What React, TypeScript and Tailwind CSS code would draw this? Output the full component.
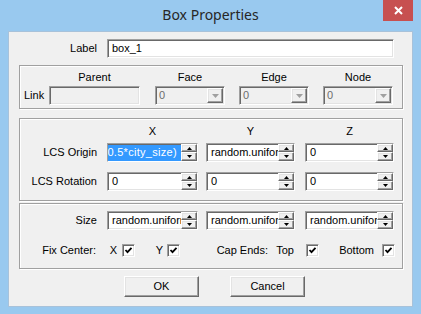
import type { ReactNode } from 'react';

const SUNKEN =
  'border border-t-[#a0a0a0] border-l-[#a0a0a0] border-b-white border-r-white shadow-[inset_1px_1px_0_#696969,inset_-1px_-1px_0_#e3e3e3]';
const RAISED =
  'border border-t-white border-l-white border-b-[#696969] border-r-[#696969] shadow-[inset_-1px_-1px_0_#a0a0a0,inset_1px_1px_0_#e3e3e3] bg-[#f0f0f0]';
const GROUP = 'border border-[#a0a0a0] shadow-[inset_1px_1px_0_#ffffff,1px_1px_0_#ffffff]';

const Spin = () => (
  <div className="flex w-[16px] shrink-0 flex-col">
    <div className={`${RAISED} flex h-[8px] items-center justify-center`}>
      <svg width="5" height="3" viewBox="0 0 5 3">
        <path d="M2.5 0 L5 3 L0 3 Z" fill="#000" />
      </svg>
    </div>
    <div className={`${RAISED} flex h-[9px] items-center justify-center`}>
      <svg width="5" height="3" viewBox="0 0 5 3">
        <path d="M0 0 L5 0 L2.5 3 Z" fill="#000" />
      </svg>
    </div>
  </div>
);

type SpinEditProps = { width: string; value: string; selected?: boolean };

const SpinEdit = ({ width, value, selected }: SpinEditProps) => (
  <div className={`${SUNKEN} ${width} flex h-[19px] shrink-0 bg-white`}>
    {selected ? (
      <div className="flex flex-1 justify-end overflow-hidden whitespace-nowrap pt-[1px] leading-[15px]">
        <span className="bg-[#3399ff] pr-[4px] tracking-[0.3px] text-white">(0.5*city_size)</span>
      </div>
    ) : (
      <div className="flex-1 overflow-hidden whitespace-nowrap pl-[4px] pt-[1px] leading-[15px]">{value}</div>
    )}
    <Spin />
  </div>
);

const Combo = () => (
  <div className={`${SUNKEN} flex h-[19px] w-[70px] shrink-0 bg-[#f0f0f0] p-[1px]`}>
    <div className="flex-1 pl-[2px] leading-[15px] text-[#6d6d6d]">0</div>
    <div className={`${RAISED} flex w-[16px] items-center justify-center`}>
      <svg width="7" height="4" viewBox="0 0 7 4">
        <path d="M0 0 L7 0 L3.5 4 Z" fill="#a0a0a0" />
      </svg>
    </div>
  </div>
);

const Check = () => (
  <div className={`${SUNKEN} flex h-[13px] w-[13px] shrink-0 items-center justify-center bg-white`}>
    <svg width="9" height="9" viewBox="0 0 9 9">
      <path d="M1.5 4 L3.5 6.2 L7.5 1.8" fill="none" stroke="#000" strokeWidth="1.8" />
    </svg>
  </div>
);

const RowLabel = ({ children }: { children: ReactNode }) => (
  <span className="w-[77px] shrink-0 text-right">{children}</span>
);

const Button = ({ children, className }: { children: ReactNode; className: string }) => (
  <div className={`${RAISED} ${className} flex h-[21px] w-[75px] items-center justify-center`}>{children}</div>
);

export default function App() {
  return (
    <div className="flex h-[314px] w-[421px] flex-col bg-[#99c9ef] font-['Liberation_Sans',Arial,sans-serif] text-[11px] text-black">
      <div className="relative flex h-[31px] shrink-0 justify-center">
        <span className="mt-[5px] font-['Noto_Sans',sans-serif] text-[14px] leading-[20px] text-[#262626]">
          Box Properties
        </span>
        <div className="absolute right-[8px] top-0 flex h-[21px] w-[30px] items-center justify-center bg-[#c75050]">
          <svg width="9" height="9" viewBox="0 0 9 9">
            <path d="M1 1 L8 8 M8 1 L1 8" stroke="#fff" strokeWidth="2" />
          </svg>
        </div>
      </div>

      <div className="mx-[8px] flex h-[276px] flex-col border border-[#a8c2da] bg-[#f0f0f0]">
        {/* label */}
        <div className="mt-[7px] flex items-center">
          <span className="w-[88px] text-right">Label</span>
          <div className={`${SUNKEN} ml-[10px] h-[19px] w-[287px] bg-white pl-[4px] pt-[1px] leading-[15px]`}>box_1</div>
        </div>

        {/* link */}
        <div className={`${GROUP} ml-[10px] mt-[7px] flex h-[44px] w-[384px] flex-col`}>
          <div className="mt-[4px] flex h-[14px] leading-[14px]">
            <span className="w-[29px]" />
            <span className="w-[91px] text-center">Parent</span>
            <span className="ml-[15px] w-[70px] text-center">Face</span>
            <span className="ml-[14px] w-[70px] text-center">Edge</span>
            <span className="ml-[14px] w-[70px] text-center">Node</span>
          </div>
          <div className="mt-[2px] flex items-center">
            <span className="w-[29px] pl-[4px]">Link</span>
            <div className={`${SUNKEN} h-[19px] w-[91px] bg-[#f0f0f0]`} />
            <div className="ml-[15px]">
              <Combo />
            </div>
            <div className="ml-[14px]">
              <Combo />
            </div>
            <div className="ml-[14px]">
              <Combo />
            </div>
          </div>
        </div>

        {/* LCS */}
        <div className={`${GROUP} ml-[10px] mt-[9px] flex h-[83px] w-[384px] flex-col`}>
          <div className="mt-[5px] flex h-[14px] leading-[14px]">
            <span className="w-[87px]" />
            <span className="w-[91px] text-center">X</span>
            <span className="ml-[8px] w-[89px] text-center">Y</span>
            <span className="ml-[10px] w-[89px] text-center">Z</span>
          </div>
          <div className="mt-[5px] flex items-center">
            <RowLabel>LCS Origin</RowLabel>
            <div className="ml-[10px] flex gap-[8px]">
              <SpinEdit width="w-[91px]" value="" selected />
              <SpinEdit width="w-[89px]" value="random.uniform(-10, 10)" />
            </div>
            <div className="ml-[10px]">
              <SpinEdit width="w-[89px]" value="0" />
            </div>
          </div>
          <div className="mt-[10px] flex items-center">
            <RowLabel>LCS Rotation</RowLabel>
            <div className="ml-[10px] flex gap-[8px]">
              <SpinEdit width="w-[91px]" value="0" />
              <SpinEdit width="w-[89px]" value="0" />
            </div>
            <div className="ml-[10px]">
              <SpinEdit width="w-[89px]" value="0" />
            </div>
          </div>
        </div>

        {/* size */}
        <div className={`${GROUP} ml-[10px] mt-[2px] flex h-[66px] w-[384px] flex-col`}>
          <div className="mt-[7px] flex items-center">
            <RowLabel>Size</RowLabel>
            <div className="ml-[10px] flex gap-[8px]">
              <SpinEdit width="w-[91px]" value="random.uniform(5, 10)" />
              <SpinEdit width="w-[89px]" value="random.uniform(5, 10)" />
            </div>
            <div className="ml-[10px]">
              <SpinEdit width="w-[89px]" value="random.uniform(5, 10)" />
            </div>
          </div>
          <div className="mt-[14px] flex h-[13px] items-center">
            <span className="w-[76px] shrink-0 text-right">Fix Center:</span>
            <span className="w-[21px] shrink-0 text-right">X</span>
            <span className="ml-[5px]">
              <Check />
            </span>
            <span className="w-[28px] shrink-0 text-right">Y</span>
            <span className="ml-[4px]">
              <Check />
            </span>
            <span className="w-[88px] shrink-0 text-right">Cap Ends:</span>
            <span className="w-[26px] shrink-0 text-right">Top</span>
            <span className="ml-[12px]">
              <Check />
            </span>
            <span className="w-[55px] shrink-0 text-right">Bottom</span>
            <span className="ml-[8px]">
              <Check />
            </span>
          </div>
        </div>

        {/* buttons */}
        <div className="mt-[7px] flex">
          <Button className="ml-[115px]">OK</Button>
          <Button className="ml-[31px]">Cancel</Button>
        </div>
      </div>
    </div>
  );
}
